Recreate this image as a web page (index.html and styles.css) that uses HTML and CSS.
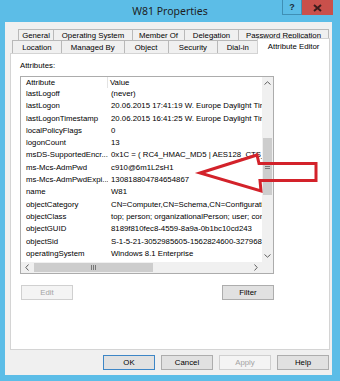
FILE: index.html
```html
<!DOCTYPE html>
<html>
<head>
<meta charset="utf-8">
<link rel="stylesheet" href="styles.css">
</head>
<body>
<div class="window">
  <div class="titlebar">
    <div class="title">W81 Properties</div>
    <div class="controls">
      <div class="btn-help">?</div>
      <div class="btn-close"><svg width="9" height="8" viewBox="0 0 9 8"><path d="M1 1L8 7M8 1L1 7" stroke="#3b1c1c" stroke-width="2"/></svg></div>
    </div>
  </div>
  <div class="dialog">
    <div class="tabs">
      <div class="tabrow row1">
        <div class="tab t-general">General</div>
        <div class="tab t-os">Operating System</div>
        <div class="tab t-member">Member Of</div>
        <div class="tab t-deleg">Delegation</div>
        <div class="tab t-pwrep">Password Replication</div>
      </div>
      <div class="tabrow row2">
        <div class="tab t-loc">Location</div>
        <div class="tab t-managed">Managed By</div>
        <div class="tab t-object">Object</div>
        <div class="tab t-sec">Security</div>
        <div class="tab t-dial">Dial-in</div>
        <div class="tab t-attr selected">Attribute Editor</div>
      </div>
    </div>
    <div class="panel">
      <div class="label">Attributes:</div>
      <div class="listbox">
        <div class="list">
          <div class="lhead"><div class="a">Attribute</div><div class="v">Value</div></div>
          <div class="row"><div class="a">lastLogoff</div><div class="v">(never)</div></div>
          <div class="row"><div class="a">lastLogon</div><div class="v">20.06.2015 17:41:19 W. Europe Daylight Time</div></div>
          <div class="row"><div class="a">lastLogonTimestamp</div><div class="v">20.06.2015 16:41:25 W. Europe Daylight Time</div></div>
          <div class="row"><div class="a">localPolicyFlags</div><div class="v">0</div></div>
          <div class="row"><div class="a">logonCount</div><div class="v">13</div></div>
          <div class="row"><div class="a">msDS-SupportedEncr...</div><div class="v">0x1C = ( RC4_HMAC_MD5 | AES128_CTS_HMAC_SHA1_96 )</div></div>
          <div class="row"><div class="a">ms-Mcs-AdmPwd</div><div class="v">c910@6m1L2sH1</div></div>
          <div class="row"><div class="a">ms-Mcs-AdmPwdExpi...</div><div class="v">130818804784654867</div></div>
          <div class="row"><div class="a">name</div><div class="v">W81</div></div>
          <div class="row"><div class="a">objectCategory</div><div class="v">CN=Computer,CN=Schema,CN=Configuration,DC=corp</div></div>
          <div class="row"><div class="a">objectClass</div><div class="v">top; person; organizationalPerson; user; computer</div></div>
          <div class="row"><div class="a">objectGUID</div><div class="v">8189f810fec8-4559-8a9a-0b1bc10cd243</div></div>
          <div class="row"><div class="a">objectSid</div><div class="v">S-1-5-21-3052985605-1562824600-3279687512-1104</div></div>
          <div class="row"><div class="a">operatingSystem</div><div class="v">Windows 8.1 Enterprise</div></div>
        </div>
        <div class="vscroll">
          <div class="arrow"><svg width="7" height="4" viewBox="0 0 7 4"><path d="M0.5 3.5L3.5 0.8L6.5 3.5" fill="none" stroke="#606060" stroke-width="1"/></svg></div>
          <div class="vtrack"><div class="vthumb"><span class="grip-v"></span></div></div>
          <div class="arrow"><svg width="7" height="4" viewBox="0 0 7 4"><path d="M0.5 0.5L3.5 3.2L6.5 0.5" fill="none" stroke="#606060" stroke-width="1"/></svg></div>
        </div>
        <div class="hscroll">
          <div class="harrow"><svg width="4" height="7" viewBox="0 0 4 7"><path d="M3.5 0.5L0.8 3.5L3.5 6.5" fill="none" stroke="#606060" stroke-width="1"/></svg></div>
          <div class="htrack"><div class="hthumb"><span class="grip-h"></span></div></div>
          <div class="harrow"><svg width="4" height="7" viewBox="0 0 4 7"><path d="M0.5 0.5L3.2 3.5L0.5 6.5" fill="none" stroke="#606060" stroke-width="1"/></svg></div>
        </div>
        <div class="corner"></div>
      </div>
      <div class="panelbtns">
        <div class="button disabled">Edit</div>
        <div class="button">Filter</div>
      </div>
    </div>
    <div class="dlgbtns">
      <div class="button default">OK</div>
      <div class="button">Cancel</div>
      <div class="button disabled">Apply</div>
      <div class="button">Help</div>
    </div>
  </div>
  <svg class="callout" width="340" height="381" viewBox="0 0 340 381">
    <polygon points="200,173 257,155 259,163.5 316,163.5 316,180.5 260,180.5 261,191" fill="none" stroke="#d3222a" stroke-width="3" stroke-linejoin="miter"/>
  </svg>
</div>
</body>
</html>
```
FILE: styles.css
```css
body { margin: 0; }
.window {
  position: relative;
  width: 340px;
  height: 381px;
  background: #5cbde7;
  display: flex;
  flex-direction: column;
  font-family: "Liberation Sans", Arial, sans-serif;
  font-size: 7.8px;
  color: #000;
  overflow: hidden;
}
.titlebar {
  height: 22px;
  display: flex;
  padding-left: 58px;
  padding-right: 7px;
}
.title {
  flex: 1;
  text-align: center;
  font-family: "Noto Sans", sans-serif;
  font-size: 10.5px;
  line-height: 22px;
  color: #1e1e1e;
}
.controls { display: flex; align-items: flex-start; width: 51px; }
.btn-help {
  width: 20px; height: 15px;
  box-sizing: border-box;
  border: 1px solid #3f8fb5;
  border-top: none;
  font-weight: bold;
  font-size: 9px;
  text-align: center;
  line-height: 14px;
  color: #1b2b3a;
}
.btn-close {
  width: 31px; height: 15px;
  background: #c9504b;
  display: flex; align-items: center; justify-content: center;
}
.dialog {
  flex: 1;
  margin: 0 8px 6px 5px;
  background: #f0f0f0;
  padding: 7px 2px 0 5px;
  display: flex;
  flex-direction: column;
}
.tabs { display: flex; flex-direction: column; }
.tabrow { display: flex; align-items: flex-end; }
.row1 { height: 11px; margin-left: 8px; }
.row2 { height: 13px; margin-left: 2px; position: relative; z-index: 2; }
.tab {
  box-sizing: border-box;
  height: 100%;
  border: 1px solid #b9b9b9;
  border-bottom: none;
  background: #f0f0f0;
  text-align: center;
  white-space: nowrap;
  display: flex; align-items: center; justify-content: center;
  margin-left: -1px;
}
.tab:first-child { margin-left: 0; }
.row2 .tab { height: 13px; }
.tab.selected {
  height: 16px;
  background: #fff;
  margin-bottom: -1px;
  border-color: #d2d2d2;
  padding-bottom: 1px;
}
.t-general { width: 36px; }
.t-os { width: 80px; }
.t-member { width: 53px; }
.t-deleg { width: 55px; }
.t-pwrep { width: 91px; }
.t-loc { width: 50px; }
.t-managed { width: 64px; }
.t-object { width: 45px; }
.t-sec { width: 51px; }
.t-dial { width: 41px; }
.t-attr { width: 73px; }
.panel {
  box-sizing: border-box;
  height: 297px;
  border: 1px solid #d4d4d4;
  background: #fff;
  padding: 7px 0 0 9px;
  display: flex;
  flex-direction: column;
}
.label { line-height: 10px; height: 10px; margin-bottom: 5px; }
.listbox {
  box-sizing: border-box;
  width: 254px;
  height: 198px;
  border: 1px solid #acacac;
  display: grid;
  grid-template-columns: 241px 11px;
  grid-template-rows: 185px 11px;
}
.list { overflow: hidden; }
.lhead, .row { display: flex; white-space: nowrap; }
.lhead { height: 11px; line-height: 11px; }
.row { height: 12.3px; line-height: 12.3px; }
.a { width: 87px; flex: none; box-sizing: border-box; padding-left: 5px; overflow: hidden; }
.v { flex: 1; padding-left: 3px; overflow: hidden; }
.lhead .a { border-right: 1px solid #e3e3e3; }
.lhead .v { padding-left: 2px; }
.vscroll {
  background: #f0f0f0;
  display: flex;
  flex-direction: column;
}
.arrow { height: 12px; display: flex; align-items: center; justify-content: center; flex: none; }
.vtrack { flex: 1; }
.vthumb {
  margin: 49px 1px 0 1px;
  height: 57px;
  background: #cdcdcd;
  display: flex; align-items: center; justify-content: center;
}
.grip-v { width: 5px; height: 5px; border-top: 1px solid #777; border-bottom: 1px solid #777; box-sizing: border-box; position: relative; }
.grip-v::after { content: ""; position: absolute; left: 0; right: 0; top: 1px; border-top: 1px solid #777; }
.hscroll { background: #f0f0f0; display: flex; }
.harrow { width: 12px; display: flex; align-items: center; justify-content: center; flex: none; }
.htrack { flex: 1; display: flex; align-items: stretch; padding: 1px 0; }
.hthumb {
  width: 119px; margin-left: 1px;
  background: #cdcdcd;
  display: flex; align-items: center; justify-content: center;
}
.grip-h { width: 5px; height: 5px; border-left: 1px solid #777; border-right: 1px solid #777; box-sizing: border-box; position: relative; }
.grip-h::after { content: ""; position: absolute; top: 0; bottom: 0; left: 1px; border-left: 1px solid #777; }
.corner { background: #f0f0f0; }
.panelbtns {
  width: 254px;
  margin-top: 11px;
  padding-left: 1px;
  box-sizing: border-box;
  display: flex;
  justify-content: space-between;
}
.button {
  box-sizing: border-box;
  width: 52px;
  height: 15px;
  line-height: 13px;
  text-align: center;
  background: #e1e1e1;
  border: 1px solid #adadad;
}
.button.disabled { background: #f4f4f4; border-color: #d0d0d0; color: #a3a3a3; }
.button.default { border-color: #3d86c6; }
.dlgbtns {
  margin-top: 5px;
  padding-right: 1px;
  display: flex;
  justify-content: flex-end;
  gap: 6px;
}
.callout { position: absolute; left: 0; top: 0; pointer-events: none; }
```
